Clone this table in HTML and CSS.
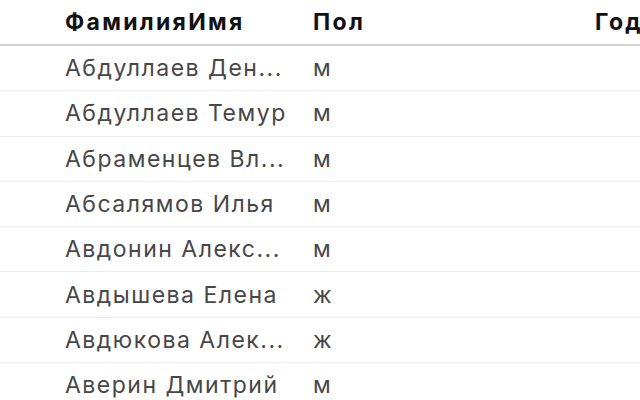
FILE: index.html
```html
<!DOCTYPE html>
<html lang="ru">
<head>
<meta charset="utf-8">
<link rel="stylesheet" href="styles.css">
</head>
<body>
<div class="table">
  <div class="row head">
    <div class="cell name">ФамилияИмя</div>
    <div class="cell sex">Пол</div>
    <div class="cell year">Год</div>
  </div>
  <div class="row"><div class="cell name">Абдуллаев Ден...</div><div class="cell sex">м</div><div class="cell year"></div></div>
  <div class="row"><div class="cell name">Абдуллаев Темур</div><div class="cell sex">м</div><div class="cell year"></div></div>
  <div class="row"><div class="cell name">Абраменцев Вл...</div><div class="cell sex">м</div><div class="cell year"></div></div>
  <div class="row"><div class="cell name">Абсалямов Илья</div><div class="cell sex">м</div><div class="cell year"></div></div>
  <div class="row"><div class="cell name">Авдонин Алекс...</div><div class="cell sex">м</div><div class="cell year"></div></div>
  <div class="row"><div class="cell name">Авдышева Елена</div><div class="cell sex">ж</div><div class="cell year"></div></div>
  <div class="row"><div class="cell name">Авдюкова Алек...</div><div class="cell sex">ж</div><div class="cell year"></div></div>
  <div class="row"><div class="cell name">Аверин Дмитрий</div><div class="cell sex">м</div><div class="cell year"></div></div>
</div>
</body>
</html>
```
FILE: styles.css
```css
html, body {
  margin: 0;
  padding: 0;
  background: #ffffff;
  overflow: hidden;
}
body {
  font-family: Inter, "Liberation Sans", sans-serif;
  font-size: 23px;
  letter-spacing: 1.5px;
  color: #474747;
  width: 640px;
  height: 400px;
}
.table {
  display: flex;
  flex-direction: column;
}
.row {
  display: flex;
  align-items: center;
  height: 44.3px;
  padding-left: 65px;
  border-bottom: 1px solid #ececec;
  white-space: nowrap;
  flex-shrink: 0;
}
.row.head {
  height: 44px;
  border-bottom: 2px solid #d2d2d2;
  font-weight: 700;
  letter-spacing: 2.3px;
  color: #111111;
}
.name {
  width: 248px;
  flex-shrink: 0;
}
.sex {
  width: 282px;
  flex-shrink: 0;
}
.year {
  flex: 1;
}
```
